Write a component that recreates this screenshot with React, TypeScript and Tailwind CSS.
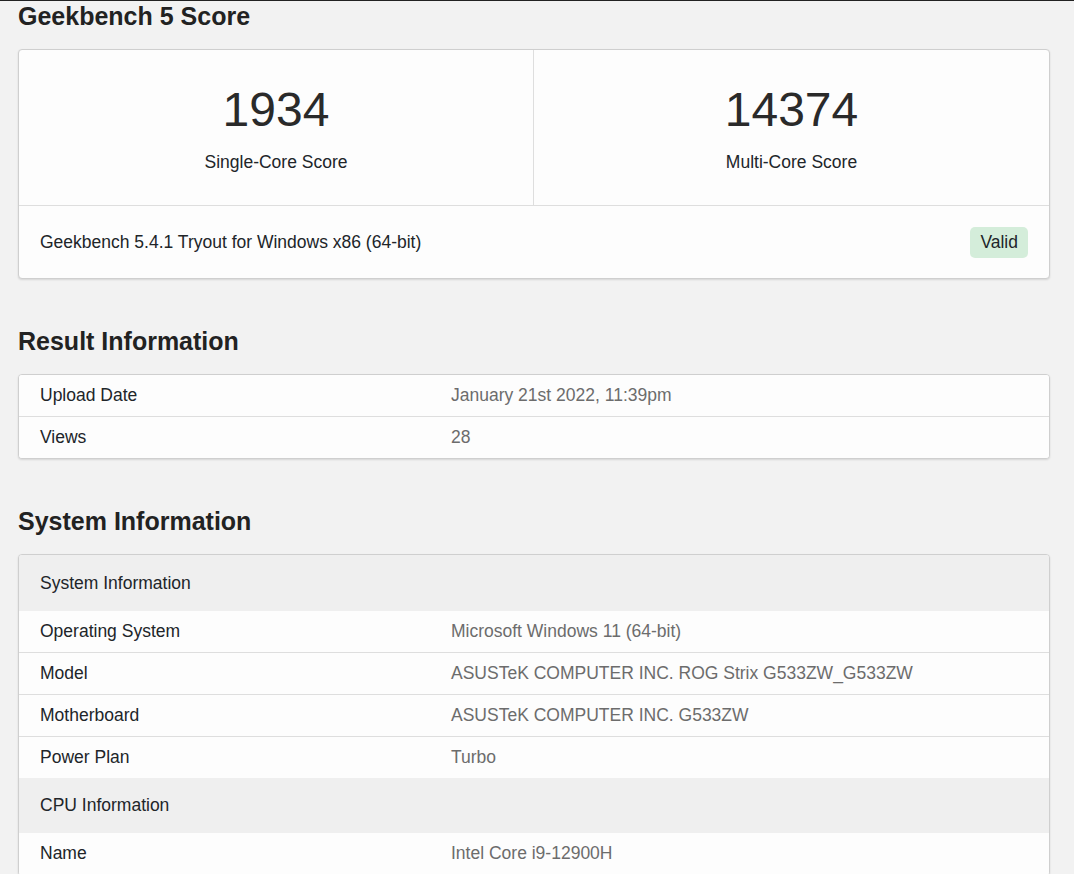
import React from "react";

const font = { fontFamily: '"Liberation Sans", Arial, sans-serif' };

function Row({ label, value, last }: { label: string; value: string; last?: boolean }) {
  return (
    <div className={`flex items-center bg-[#fdfdfd] px-[21px] ${last ? "h-[41px]" : "h-[42px] border-b border-[#dedede]"}`}>
      <div className="w-[411px] shrink-0 text-[#212529]">{label}</div>
      <div className="flex-1 text-[#6c6c6c]">{value}</div>
    </div>
  );
}

function Header({ label, h }: { label: string; h: string }) {
  return (
    <div className={`flex items-center bg-[#efefef] px-[21px] text-[#212529] ${h}`}>{label}</div>
  );
}

export default function App() {
  return (
    <div style={font} className="h-[874px] w-full overflow-hidden bg-[#f2f2f2] text-[17.5px] text-[#212529]">
      <div className="h-px w-full bg-[#222]" />
      <div className="w-[1032px] ml-[18px]">
        <h2 className="mt-[1px] h-[29px] text-[25px] font-bold leading-[29px] text-[#222]">Geekbench 5 Score</h2>
        <div className="mt-[18px] rounded-[4px] border border-[#cfcfcf] bg-[#fdfdfd] shadow-[0_1px_2px_rgba(0,0,0,0.12)]">
          <div className="flex h-[156px] border-b border-[#dedede]">
            <div className="flex w-[515px] flex-col items-center border-r border-[#dedede] pt-[32px]">
              <div className="text-[48px] leading-[56px] text-[#2a2a2a]">1934</div>
              <div className="mt-[14px] leading-[20px]">Single-Core Score</div>
            </div>
            <div className="flex flex-1 flex-col items-center pt-[32px]">
              <div className="text-[48px] leading-[56px] text-[#2a2a2a]">14374</div>
              <div className="mt-[14px] leading-[20px]">Multi-Core Score</div>
            </div>
          </div>
          <div className="flex h-[72px] items-center justify-between pl-[21px] pr-[21px]">
            <span>Geekbench 5.4.1 Tryout for Windows x86 (64-bit)</span>
            <span className="rounded-[5px] bg-[#d4edda] px-[10px] py-[6px] leading-[19px] text-[#212529]">Valid</span>
          </div>
        </div>

        <h2 className="mt-[48px] h-[29px] text-[25px] font-bold leading-[29px] text-[#222]">Result Information</h2>
        <div className="mt-[18px] overflow-hidden rounded-[4px] border border-[#cfcfcf] bg-[#fdfdfd] shadow-[0_1px_2px_rgba(0,0,0,0.12)]">
          <Row label="Upload Date" value="January 21st 2022, 11:39pm" />
          <Row label="Views" value="28" last />
        </div>

        <h2 className="mt-[48px] h-[29px] text-[25px] font-bold leading-[29px] text-[#222]">System Information</h2>
        <div className="mt-[18px] overflow-hidden rounded-[4px] border border-[#cfcfcf] bg-[#fdfdfd] shadow-[0_1px_2px_rgba(0,0,0,0.12)]">
          <Header label="System Information" h="h-[56px]" />
          <Row label="Operating System" value="Microsoft Windows 11 (64-bit)" />
          <Row label="Model" value="ASUSTeK COMPUTER INC. ROG Strix G533ZW_G533ZW" />
          <Row label="Motherboard" value="ASUSTeK COMPUTER INC. G533ZW" />
          <Row label="Power Plan" value="Turbo" last />
          <Header label="CPU Information" h="h-[55px]" />
          <Row label="Name" value="Intel Core i9-12900H" />
        </div>
      </div>
    </div>
  );
}
